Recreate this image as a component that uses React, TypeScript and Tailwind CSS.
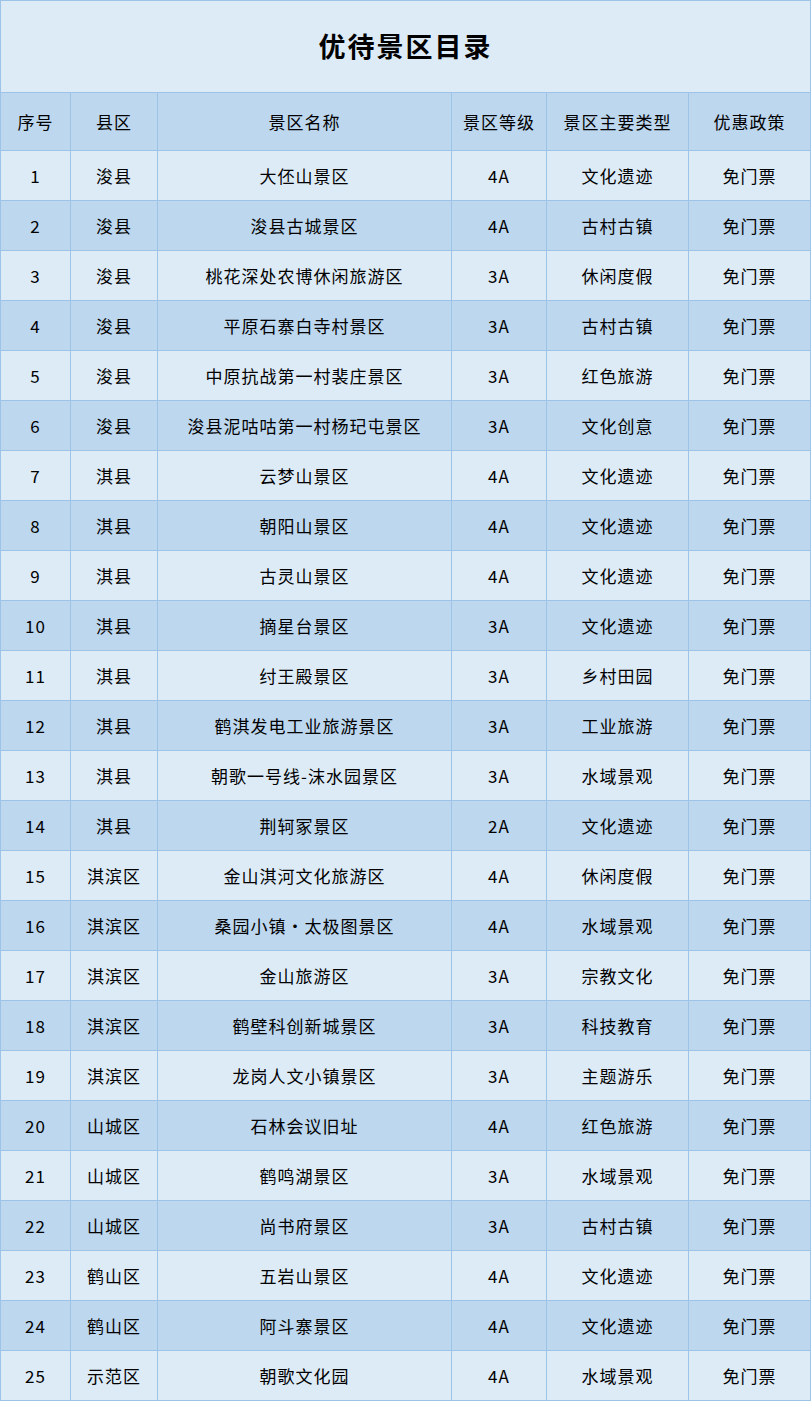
import React from 'react';

type Row = [string, string, string, string, string];

const rows: Row[] = [
  ['浚县', '大伾山景区', '4A', '文化遗迹', '免门票'],
  ['浚县', '浚县古城景区', '4A', '古村古镇', '免门票'],
  ['浚县', '桃花深处农博休闲旅游区', '3A', '休闲度假', '免门票'],
  ['浚县', '平原石寨白寺村景区', '3A', '古村古镇', '免门票'],
  ['浚县', '中原抗战第一村裴庄景区', '3A', '红色旅游', '免门票'],
  ['浚县', '浚县泥咕咕第一村杨玘屯景区', '3A', '文化创意', '免门票'],
  ['淇县', '云梦山景区', '4A', '文化遗迹', '免门票'],
  ['淇县', '朝阳山景区', '4A', '文化遗迹', '免门票'],
  ['淇县', '古灵山景区', '4A', '文化遗迹', '免门票'],
  ['淇县', '摘星台景区', '3A', '文化遗迹', '免门票'],
  ['淇县', '纣王殿景区', '3A', '乡村田园', '免门票'],
  ['淇县', '鹤淇发电工业旅游景区', '3A', '工业旅游', '免门票'],
  ['淇县', '朝歌一号线-沫水园景区', '3A', '水域景观', '免门票'],
  ['淇县', '荆轲冢景区', '2A', '文化遗迹', '免门票'],
  ['淇滨区', '金山淇河文化旅游区', '4A', '休闲度假', '免门票'],
  ['淇滨区', '桑园小镇·太极图景区', '4A', '水域景观', '免门票'],
  ['淇滨区', '金山旅游区', '3A', '宗教文化', '免门票'],
  ['淇滨区', '鹤壁科创新城景区', '3A', '科技教育', '免门票'],
  ['淇滨区', '龙岗人文小镇景区', '3A', '主题游乐', '免门票'],
  ['山城区', '石林会议旧址', '4A', '红色旅游', '免门票'],
  ['山城区', '鹤鸣湖景区', '3A', '水域景观', '免门票'],
  ['山城区', '尚书府景区', '3A', '古村古镇', '免门票'],
  ['鹤山区', '五岩山景区', '4A', '文化遗迹', '免门票'],
  ['鹤山区', '阿斗寨景区', '4A', '文化遗迹', '免门票'],
  ['示范区', '朝歌文化园', '4A', '水域景观', '免门票'],
];

const headers = ['序号', '县区', '景区名称', '景区等级', '景区主要类型', '优惠政策'];

const cell = 'border border-[#9dc3e6] text-center align-middle font-normal';

const App: React.FC = () => {
  return (
    <div
      className="w-[812px] bg-white text-black"
      style={{ fontFamily: '"Noto Sans CJK SC", "Liberation Serif", serif' }}
    >
      <table className="w-[811px] table-fixed border-collapse text-[17px] tracking-[1px]">
        <colgroup>
          <col className="w-[70px]" />
          <col className="w-[87px]" />
          <col className="w-[294px]" />
          <col className="w-[95px]" />
          <col className="w-[142px]" />
          <col className="w-[122px]" />
        </colgroup>
        <thead>
          <tr className="h-[92px] bg-[#ddebf7]">
            <th colSpan={6} className={cell + ' text-[27px] tracking-[2px]'}>
              <span className="font-bold">优待景区目录</span>
            </th>
          </tr>
          <tr className="h-[58px] bg-[#bdd7ee]">
            {headers.map((h) => (
              <th key={h} className={cell}>
                {h}
              </th>
            ))}
          </tr>
        </thead>
        <tbody>
          {rows.map((r, i) => (
            <tr key={i} className={i % 2 === 0 ? 'h-[50px] bg-[#ddebf7]' : 'h-[50px] bg-[#bdd7ee]'}>
              <td className={cell}>{i + 1}</td>
              {r.map((v, j) => (
                <td key={j} className={cell}>
                  {v}
                </td>
              ))}
            </tr>
          ))}
        </tbody>
      </table>
    </div>
  );
};

export default App;
